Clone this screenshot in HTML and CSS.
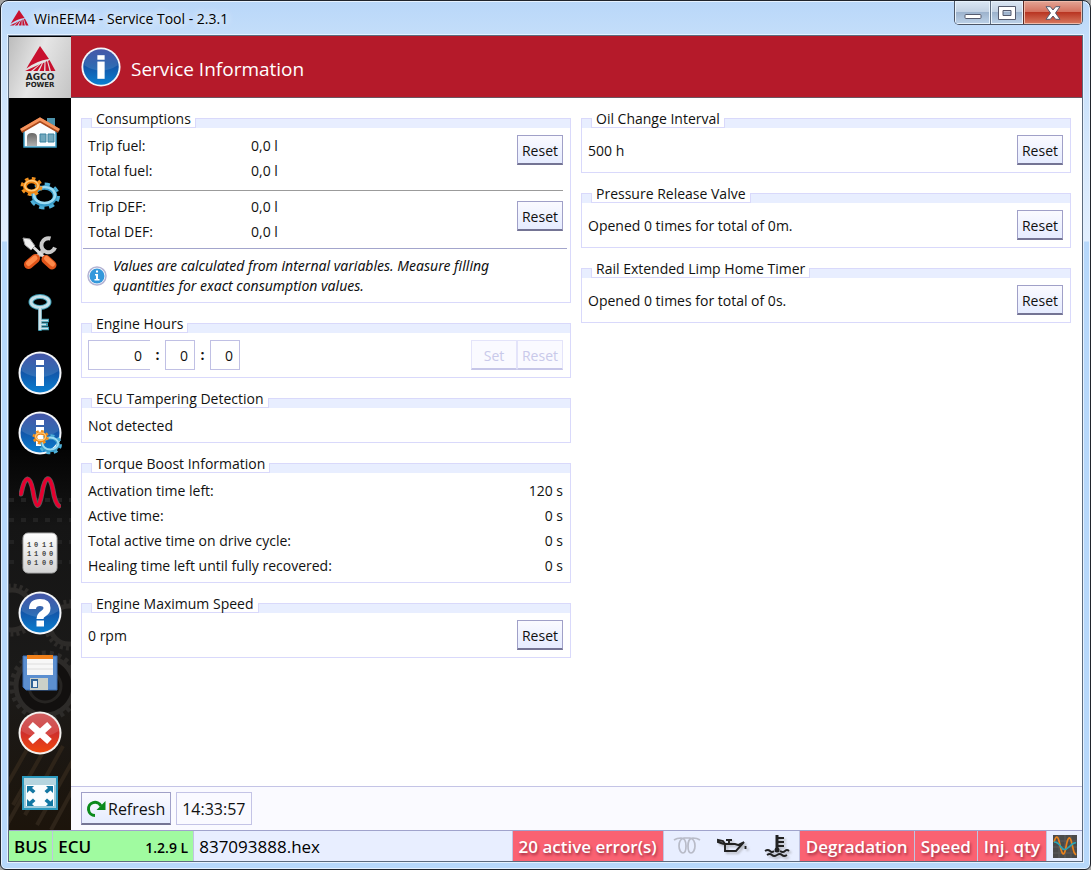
FILE: index.html
```html
<!DOCTYPE html>
<html lang="en">
<head>
<meta charset="utf-8">
<title>WinEEM4 - Service Tool - 2.3.1</title>
<link rel="stylesheet" href="styles.css">
</head>
<body>
<svg class="defs" aria-hidden="true">
  <defs>
    <linearGradient id="blue" x1="0" y1="0" x2="0" y2="1"><stop offset="0" stop-color="#2b3f9c"/><stop offset=".45" stop-color="#1453a6"/><stop offset="1" stop-color="#0a7fd0"/></linearGradient>
    <linearGradient id="red" x1="0" y1="0" x2="0" y2="1"><stop offset="0" stop-color="#c8474a"/><stop offset=".5" stop-color="#cf2e2b"/><stop offset="1" stop-color="#f0480e"/></linearGradient>
    <linearGradient id="pale" x1="0" y1="0" x2="0" y2="1"><stop offset="0" stop-color="#ffffff"/><stop offset="1" stop-color="#d4d4d4"/></linearGradient>
    <linearGradient id="door" x1="0" y1="0" x2="0" y2="1"><stop offset="0" stop-color="#666"/><stop offset="1" stop-color="#b0b0b0"/></linearGradient>
    <linearGradient id="dusk" x1="0" y1="0" x2="0" y2="1"><stop offset="0" stop-color="#040404"/><stop offset=".2" stop-color="#151515"/><stop offset=".6" stop-color="#1b1a19"/><stop offset="1" stop-color="#1c140b"/></linearGradient>
    <symbol id="agco" viewBox="0 0 32 26">
      <path d="M16 0L25 13Q12 15 2.500 22.500L5 18ZM25.500 14L31.500 25H27L24 15ZM23 15L25.500 25H21.500L21.500 16ZM20.500 16.500L20 25H15.500L19 17ZM18 17.300L13.500 25H9L16.500 18ZM15.500 18.300L7 25H1L14 19Z" fill="#c8102e"/>
    </symbol>
    <symbol id="info" viewBox="0 0 44 44">
      <circle cx="22" cy="22" r="21.500" fill="#f4f6fa"/><circle cx="22" cy="22" r="19.500" fill="url(#blue)"/>
      <path d="M3.500 20A18.500 18.500 0 0 1 40.500 20Q22 32 3.500 20Z" fill="#fff" opacity=".13"/>
      <rect x="18" y="9" width="8" height="5" fill="#fff"/><rect x="18" y="16" width="8" height="19" fill="#fff"/>
    </symbol>
    <symbol id="gears" viewBox="0 0 40 34">
      <g fill="none">
        <ellipse cx="24.500" cy="20" rx="13.500" ry="11.500" stroke="#4fb0d8" stroke-width="4" stroke-dasharray="5.200 4.600"/>
        <ellipse cx="24.500" cy="20" rx="10.500" ry="8.500" stroke="#3a9dca" stroke-width="4.500"/>
        <ellipse cx="24.500" cy="19" rx="10.500" ry="8" stroke="#9cdcf3" stroke-width="2.500"/>
        <ellipse cx="11.500" cy="10.500" rx="9.200" ry="7.800" stroke="#f2921f" stroke-width="3.500" stroke-dasharray="3.500 3.200"/>
        <ellipse cx="11.500" cy="10.500" rx="6.500" ry="5.200" stroke="#ee8412" stroke-width="4"/>
        <ellipse cx="11.500" cy="9.700" rx="6.700" ry="5" stroke="#ffca78" stroke-width="1.700"/>
      </g>
    </symbol>
  </defs>
</svg>
<div class="window">
  <header class="titlebar">
    <svg class="app-icon" aria-hidden="true"><use href="#agco"/></svg>
    <span class="app-title">WinEEM4 - Service Tool - 2.3.1</span>
    <div class="window-buttons">
      <button class="win-btn" aria-label="Minimize"><svg width="18" height="14" viewBox="0 0 18 14"><rect x="1" y="8.500" width="16" height="4" rx="1" fill="#fff" stroke="#555b6e"/></svg></button>
      <button class="win-btn win-max" aria-label="Maximize"><svg width="18" height="14" viewBox="0 0 18 14"><path d="M.5.5h17v13H.5zM5 4.500v5h8v-5z" fill="#fff" fill-rule="evenodd" stroke="#555b6e"/></svg></button>
      <button class="win-btn win-close" aria-label="Close"><svg width="16" height="14" viewBox="0 0 16 14"><path d="M1 .7h4.300L8 4 10.700.7H15L10.500 7 15 13.300h-4.300L8 10l-2.700 3.300H1L5.500 7z" fill="#fff" stroke="#555b6e"/></svg></button>
    </div>
  </header>

  <div class="client">
    <div class="logo">
      <svg width="62" height="60" viewBox="0 0 62 60" role="img" aria-label="AGCO Power">
        <use href="#agco" x="15" y="9" width="32" height="26"/>
        <text x="31" y="43" class="logo-name">AGCO</text>
        <text x="31" y="50" class="logo-sub">POWER</text>
      </svg>
    </div>
    <div class="page-head">
      <svg class="head-icon" aria-hidden="true"><use href="#info"/></svg>
      <h1>Service Information</h1>
    </div>

    <nav class="sidebar" aria-label="Main">
      <svg class="texture" viewBox="0 0 62 380" preserveAspectRatio="xMidYMax slice" aria-hidden="true">
        <rect width="62" height="380" fill="url(#dusk)"/>
        <g fill="none" stroke="#2d2b29" stroke-width="5">
          <path d="M0 50h62M0 70h62M0 92h62M0 112h62" stroke="#222" stroke-width="4" stroke-dasharray="5 7"/>
          <circle cx="3" cy="160" r="20"/><circle cx="3" cy="160" r="24" stroke-dasharray="3 3"/>
          <circle cx="60" cy="175" r="19"/><circle cx="60" cy="175" r="23" stroke-dasharray="3 3"/>
          <circle cx="36" cy="236" r="29" fill="#12100f"/><circle cx="36" cy="236" r="33" stroke-dasharray="4 4"/>
          <circle cx="36" cy="236" r="16" stroke="#262422" stroke-width="3"/>
          <path d="M-5 340L28 282M4 355L42 288M16 365L54 296M28 375L64 310M42 380L70 328M-5 380L14 346" stroke="#2e2419" stroke-width="4"/>
        </g>
      </svg>
      <button aria-label="Home"><svg width="40" height="34" viewBox="0 0 40 34">
        <path d="M27 2h8v12h-8z" fill="#4d93ac"/><path d="M4 14L20 5l16 9v17H4z" fill="#fbfdff" stroke="#3b9ac4" stroke-width="1.500"/>
        <path d="M1 15L20 4l19 11" fill="none" stroke="#a9491c" stroke-width="4.500"/><path d="M1 14L20 3l19 11" fill="none" stroke="#f5935c" stroke-width="3"/>
        <path d="M7 30v-9q0-4 5-4t5 4v9z" fill="url(#door)"/><path d="M20 18h6v8h-6zM28 18h6v8h-6z" fill="#70a7bd" stroke="#3a829f"/></svg></button>
      <button aria-label="Settings"><svg width="40" height="34"><use href="#gears"/></svg></button>
      <button aria-label="Tools"><svg width="40" height="36" viewBox="0 0 40 36">
        <path d="M16 23L24 15" stroke="#c4c4c4" stroke-width="4.500"/>
        <path d="M30.500 3.500A7 7 0 1 0 35 12.500" fill="none" stroke="#c9c9c9" stroke-width="4"/>
        <path d="M15.500 23.500L8.500 29.500" stroke="#e0551a" stroke-width="9" stroke-linecap="round"/><path d="M15 23L8.500 28.500" stroke="#ff8a4a" stroke-width="5" stroke-linecap="round"/>
        <path d="M11 10L25 23" stroke="#dcdcdc" stroke-width="3"/><path d="M3 3l7 1 5 7-4 4-6-5z" fill="#efefef" stroke="#999"/>
        <path d="M26 24.500L32 30" stroke="#e0551a" stroke-width="9" stroke-linecap="round"/><path d="M26.500 23.500L32.500 29" stroke="#ff8a4a" stroke-width="5" stroke-linecap="round"/></svg></button>
      <button aria-label="Access key"><svg width="24" height="38" viewBox="0 0 24 38" fill="none">
        <ellipse cx="12" cy="8" rx="9" ry="5.500" stroke="#3e9eb5" stroke-width="5"/><ellipse cx="12" cy="8" rx="9" ry="5.500" stroke="#c5dfe8" stroke-width="3"/>
        <path d="M12 14v23M14 26.500h7M14 30.500h6M14 34.500h7" stroke="#3e9eb5" stroke-width="3.500"/><path d="M12 13v23" stroke="#cfe3ea" stroke-width="3"/><path d="M13 26.500h7M13 30.500h5M13 34.500h7" stroke="#cfe3ea" stroke-width="1.500"/></svg></button>
      <button aria-label="Service information"><svg width="44" height="44"><use href="#info"/></svg></button>
      <button aria-label="Information settings"><svg width="44" height="44" viewBox="0 0 44 44"><use href="#info" width="44" height="44"/><use href="#gears" x="14" y="18" width="30" height="26"/></svg></button>
      <button aria-label="Measurements"><svg width="42" height="34" viewBox="0 0 42 34" fill="none" stroke-linecap="round"><path d="M2 18C6-2 11-1 14 15C17 34 20 34 23 17C26-1 31-2 34 14Q36 27 40 30" stroke="#5a5a5a" stroke-width="5"/><path d="M2 18C6-2 11-1 14 15C17 34 20 34 23 17C26-1 31-2 34 14Q36 27 40 30" stroke="#e5002f" stroke-width="3.500"/></svg></button>
      <button aria-label="Binary data"><svg width="36" height="42" viewBox="0 0 36 42"><rect x="1" y="1" width="34" height="40" rx="5" fill="url(#pale)" stroke="#aaa"/>
        <g class="bits"><text x="5" y="15">1</text><text x="12" y="15">0</text><text x="20" y="15">1</text><text x="27" y="15">1</text><text x="5" y="24">1</text><text x="12" y="24">1</text><text x="20" y="24">0</text><text x="27" y="24">0</text><text x="5" y="33">0</text><text x="12" y="33">1</text><text x="20" y="33">0</text><text x="27" y="33">0</text></g></svg></button>
      <button aria-label="Help"><svg width="44" height="44" viewBox="0 0 44 44"><circle cx="22" cy="22" r="21.500" fill="#f4f6fa"/><circle cx="22" cy="22" r="19.500" fill="url(#blue)"/><path d="M3.500 20A18.500 18.500 0 0 1 40.500 20Q22 32 3.500 20Z" fill="#fff" opacity=".13"/>
        <path d="M14.500 18q0-6.500 7.500-6.500 7 0 7 5.500 0 3.500-3.500 5.500-3.500 2-3.500 5.500" fill="none" stroke="#fff" stroke-width="7"/><rect x="18.500" y="29.500" width="7.500" height="6" fill="#fff"/></svg></button>
      <button aria-label="Save"><svg width="36" height="36" viewBox="0 0 36 36"><path d="M1 1h34v34H4l-3-3z" fill="#5c8fd0" stroke="#3c6fb4"/><path d="M5 1h26v19H5z" fill="#f7f7f7"/><path d="M5 0h26v4H5z" fill="#f0801a"/><path d="M5 9h26M5 14h26" stroke="#ddd"/>
        <path d="M8 23h18v12H8z" fill="#ccd0c8"/><path d="M9 24h7v9H9z" fill="#2f6296"/><path d="M11 26h4v6h-4z" fill="#e8eef2"/></svg></button>
      <button aria-label="Disconnect"><svg width="44" height="44" viewBox="0 0 44 44"><circle cx="22" cy="22" r="21.500" fill="#f3f1ef"/><circle cx="22" cy="22" r="19.500" fill="url(#red)"/><path d="M3.500 20A18.500 18.500 0 0 1 40.500 20Q22 32 3.500 20Z" fill="#fff" opacity=".13"/><path d="M12.500 13.500l19 17M31.500 13.500l-19 17" stroke="#fff" stroke-width="7"/></svg></button>
      <button aria-label="Full screen"><svg width="36" height="34" viewBox="0 0 36 34"><rect x="1" y="1" width="34" height="32" fill="#fafdfe" stroke="#2b98bd" stroke-width="2"/><path d="M2 2h32v7H2z" fill="#b6d5df"/><path d="M3 9v23M33 9v23M2 31h32" stroke="#9ccbdb" stroke-width="2"/>
        <path d="M5 10h7l-2 2 3.500 3-2.500 2.500-3.500-3L5 17zM31 10h-7l2 2-3.500 3 2.500 2.500 3.500-3L31 17zM5 30h7l-2-2 3.500-3-2.500-2.500-3.500 3L5 23zM31 30h-7l2-2-3.500-3 2.500-2.500 3.500 3L31 23z" fill="#1277a2"/></svg></button>
    </nav>

    <main class="content">
      <div class="column">
        <section class="panel">
          <div class="panel-head"><h2>Consumptions</h2></div>
          <div class="panel-body">
            <div class="group">
              <dl class="readings"><dt>Trip fuel:</dt><dd>0,0 l</dd><dt>Total fuel:</dt><dd>0,0 l</dd></dl>
              <button class="btn">Reset</button>
            </div>
            <div class="group group-def">
              <dl class="readings"><dt>Trip DEF:</dt><dd>0,0 l</dd><dt>Total DEF:</dt><dd>0,0 l</dd></dl>
              <button class="btn">Reset</button>
            </div>
          </div>
          <div class="note">
            <svg width="20" height="20" viewBox="0 0 20 20" aria-hidden="true"><circle cx="10" cy="10" r="9" fill="#fff" stroke="#b4b4d4" stroke-width="1.500"/><circle cx="10" cy="10" r="7.500" fill="#3498db"/><path d="M9 4.500h2v2H9zM8 8h3v5h1.500v1.500H7.500V13H9V9.500H8z" fill="#fff"/></svg>
            <p>Values are calculated from internal variables. Measure filling quantities for exact consumption values.</p>
          </div>
        </section>
        <section class="panel">
          <div class="panel-head"><h2>Engine Hours</h2></div>
          <div class="panel-body action-row">
            <div class="time-entry">
              <input class="hours" aria-label="Hours" value="0"><span>:</span><input aria-label="Minutes" value="0"><span>:</span><input aria-label="Seconds" value="0">
            </div>
            <div class="btn-pair"><button class="btn" disabled>Set</button><button class="btn" disabled>Reset</button></div>
          </div>
        </section>
        <section class="panel">
          <div class="panel-head"><h2>ECU Tampering Detection</h2></div>
          <div class="panel-body"><p>Not detected</p></div>
        </section>
        <section class="panel">
          <div class="panel-head"><h2>Torque Boost Information</h2></div>
          <div class="panel-body">
            <dl class="readings timers"><dt>Activation time left:</dt><dd>120 s</dd><dt>Active time:</dt><dd>0 s</dd><dt>Total active time on drive cycle:</dt><dd>0 s</dd><dt>Healing time left until fully recovered:</dt><dd>0 s</dd></dl>
          </div>
        </section>
        <section class="panel">
          <div class="panel-head"><h2>Engine Maximum Speed</h2></div>
          <div class="panel-body action-row"><p>0 rpm</p><button class="btn">Reset</button></div>
        </section>
      </div>
      <div class="column">
        <section class="panel">
          <div class="panel-head"><h2>Oil Change Interval</h2></div>
          <div class="panel-body action-row"><p>500 h</p><button class="btn">Reset</button></div>
        </section>
        <section class="panel">
          <div class="panel-head"><h2>Pressure Release Valve</h2></div>
          <div class="panel-body action-row"><p>Opened 0 times for total of 0m.</p><button class="btn">Reset</button></div>
        </section>
        <section class="panel">
          <div class="panel-head"><h2>Rail Extended Limp Home Timer</h2></div>
          <div class="panel-body action-row"><p>Opened 0 times for total of 0s.</p><button class="btn">Reset</button></div>
        </section>
      </div>
    </main>

    <div class="toolbar">
      <button class="btn refresh"><svg width="20" height="20" viewBox="0 0 20 20" aria-hidden="true"><path d="M9 16.500A6.600 6.600 0 1 1 15 7" fill="none" stroke="#0b8a1c" stroke-width="3"/><path d="M19.500 2v9h-9z" fill="#0b8a1c"/></svg>Refresh</button>
      <time class="clock">14:33:57</time>
    </div>

    <footer class="statusbar">
      <div class="cell ok">BUS</div>
      <div class="cell ok ecu"><span>ECU</span><small>1.2.9 L</small></div>
      <div class="cell file">837093888.hex</div>
      <div class="cell alert">20 active error(s)</div>
      <div class="lamps">
        <svg width="28" height="20" viewBox="0 0 28 20" fill="none" stroke="#b8bbc8" stroke-width="1.700" role="img" aria-label="Preheat"><path d="M1 4Q4 2 8 2c4 0 5 4 5 8s-1 7-3 7-4-3-4-7 1-7 5-8h6c4 1 5 4 5 8s-2 7-4 7-3-3-3-7 1-8 5-8q4 0 7 2"/></svg>
        <svg width="30" height="16" viewBox="0 0 30 16" fill="none" stroke="#222" stroke-width="1.900" role="img" aria-label="Oil pressure"><path d="M7 6L1 4V2l5 1 2 3h10l3 1 6-3-8 9H8V6M9 2h6M12 2v4"/><path d="M28.500 8v3"/></svg>
        <svg width="26" height="24" viewBox="0 0 26 24" fill="none" stroke="#222" stroke-width="1.800" role="img" aria-label="Coolant temperature"><path d="M13 1v15" stroke-width="3"/><path d="M14 4h6M14 8h6M14 12h6M1 17q3-2 5 0t4 0M16 17q3 2 5 0t4 0M3 21q3-2 5 0t5 0 5 0 5 0"/><circle cx="13" cy="16" r="2.500" fill="#222" stroke="none"/></svg>
      </div>
      <div class="cell alert">Degradation</div>
      <div class="cell alert">Speed</div>
      <div class="cell alert">Inj. qty</div>
      <button class="scope" aria-label="Signals"><svg width="24" height="23" viewBox="0 0 24 23" fill="none" stroke-width="1.700"><rect width="24" height="23" fill="#4a4a4a"/><path d="M0 6h24M0 12h24M0 18h24M6 0v23M12 0v23M18 0v23" stroke="#5c5c5c" stroke-width="1"/><path d="M1 7c2-7 4-7 6 3s4 13 6 2 4-12 6-3 2 9 4 11" stroke="#e8811c"/><path d="M1 7q4 0 7 5t8 0 7-4" stroke="#2ba5b5"/></svg></button>
    </footer>
  </div>
</div>
</body>
</html>
```
FILE: styles.css
```css
* { box-sizing: border-box; }
body { margin: 0; background: #a4a4a4; font: 14px/20px "Open Sans", "Noto Sans", sans-serif; color: #111; }
h1, h2, p, dl, dd { margin: 0; font-weight: 400; }
button, input { font: inherit; color: inherit; margin: 0; }
svg { display: block; flex: none; }
.defs { position: absolute; width: 0; height: 0; }

.window {
  min-height: 100vh; display: flex; flex-direction: column; padding: 0 7px 7px;
  border: 1px solid #20242c; border-radius: 8px 8px 6px 6px;
  box-shadow: inset 0 0 0 1px #e6f2ff;
  background: linear-gradient(#b9d7f9 0, #c4defa 36px, #e2effe 240px, #b7d8fb 241px);
}
.titlebar { height: 34px; display: flex; align-items: flex-start; padding-left: 1px; }
.app-icon { width: 20px; height: 16px; margin: 9px 5px 0 0; }
.app-title { flex: 1; line-height: 35px; color: #000; text-shadow: 0 0 8px #fff, 0 0 10px #fff; }
.window-buttons { display: flex; border: 1px solid #4c5565; border-top: 0; border-radius: 0 0 5px 5px; overflow: hidden; }
.win-btn { width: 35px; height: 23px; padding: 0; border: 0; display: grid; place-items: center; background: linear-gradient(#dbe7f4 0, #c1d0e2 48%, #9db3cd 50%, #bdd2e8); box-shadow: inset 0 0 0 1px #e8f2fb; }
.win-max { width: 33px; border-left: 1px solid #5d6c80; }
.win-close { width: 59px; border-left: 1px solid #5d2a25; background: linear-gradient(#e3a596 0, #d4705d 48%, #b93623 50%, #d8795f); box-shadow: inset 0 0 0 1px #efb9a8; }

.client {
  flex: 1; display: grid; grid-template: 62px 1fr 44px 31px / 62px 1fr;
  border: 1px solid #5c6b7e; background: #fff; box-shadow: 0 0 0 1px #e4f1ff;
}
.logo { background: linear-gradient(110deg, #bcbcbc, #e6e6e6 45%, #c4c4c4); border-top: 1px solid #000; }
.logo-name, .logo-sub { font: 700 9px "DejaVu Sans", sans-serif; text-anchor: middle; fill: #222; }
.logo-sub { font-size: 7px; }
.page-head { background: #b51a2a; border-bottom: 1px solid #6b5560; display: flex; align-items: center; gap: 10px; padding-left: 10px; color: #fff; }
.head-icon { width: 40px; height: 40px; }
.page-head h1 { font-size: 19px; line-height: 28px; padding-top: 4px; }

.sidebar { grid-row: 2 / 4; position: relative; background: #000; padding-top: 5px; }
.sidebar button { position: relative; width: 100%; height: 60px; padding: 0; border: 0; background: none; display: grid; place-items: center; }
.texture { position: absolute; left: 0; bottom: 0; width: 100%; height: 380px; }
.bits { font: 700 7px "Liberation Mono", monospace; fill: #444; }

.content { display: grid; grid-template-columns: 1fr 1fr; gap: 10px; padding: 20px 11px 20px 10px; align-items: start; }
.column { display: grid; gap: 20px; }
.panel { border: 1px solid #d9d9fb; }
.panel-head { height: 9px; background: #e8eeff; display: flex; align-items: flex-end; padding-left: 9px; }
.panel-head h2 {
  --edge: linear-gradient(#d9d9fb, #d9d9fb);
  font-size: 14px; line-height: 17px; padding: 0 5px 1px;
  background: var(--edge) left bottom / 1px 10px no-repeat, var(--edge) right bottom / 1px 10px no-repeat, var(--edge) bottom / 100% 1px no-repeat, #fff;
}
.panel-body { padding: 5px 7px 4px 6px; line-height: 25px; }
.action-row { display: flex; align-items: center; justify-content: space-between; padding-top: 7px; padding-bottom: 7px; line-height: 20px; }
.action-row p { padding-top: 2px; }
.group { display: flex; align-items: flex-start; justify-content: space-between; padding-bottom: 7px; }
.group .btn { margin-top: 2px; }
.group-def { border-top: 1px solid #9b9b9b; padding: 3px 0 0; }
.group-def .btn { margin-top: 7px; }
.readings { display: grid; grid-template-columns: 163px auto; }
.timers { grid-template-columns: 1fr auto; flex: 1; }
.timers dd { text-align: right; }
.note { margin: 0 3px 0 1px; border-top: 1px solid #a3a5cc; padding: 7px 50px 6px 4px; display: flex; align-items: center; gap: 6px; font-family: "Noto Sans", sans-serif; font-style: italic; }

.btn { min-width: 46px; height: 30px; padding: 2px 4px 0; border: 1px solid #a0a0c8; border-bottom: 2px solid #747494; background: linear-gradient(#fafaff, #e6ecff); }
.btn:disabled { color: #c9c9ea; border-color: #e4e4fa; border-bottom-color: #c6c6e8; background: #fafaff; }
.btn-pair { display: flex; }
.time-entry { display: flex; align-items: center; }
.time-entry span { width: 15px; text-align: center; font-weight: 700; }
.time-entry input { width: 30px; height: 30px; padding: 0 6px 0 0; text-align: right; border: 1px solid #c0c0e4; background: #fff; border-radius: 0; }
.time-entry .hours { width: 62px; border-right: 0; padding-right: 8px; }

.toolbar { border-top: 1px solid #c4c4e6; background: #fafaff; display: flex; align-items: center; gap: 5px; padding-left: 10px; font-size: 16px; }
.refresh { height: 33px; display: flex; align-items: center; gap: 2px; padding: 2px 5px 0 4px; }
.clock { height: 33px; line-height: 33px; padding: 0 5px; border: 1px solid #c4c4e6; }

.statusbar { grid-column: 1 / 3; border-top: 1px solid #a0a3cc; background: #e8eeff; display: flex; font-size: 17px; line-height: 31px; color: #000; }
.cell { padding: 0 5px; border-right: 1px solid #c0c4e0; white-space: nowrap; }
.ok { background: #a0fba0; font-weight: 600; }
.ecu { width: 141px; display: flex; justify-content: space-between; }
.ecu small { font-size: 14px; line-height: 34px; }
.file { flex: 1; }
.alert { background: #fa6272; color: #fff; font-weight: 600; padding: 0 6px; text-shadow: 1px 2px 3px #9c2c40; }
.lamps { width: 136px; display: flex; align-items: center; justify-content: space-between; padding: 0 9px; border-right: 1px solid #c0c4e0; }
.lamps svg + svg { filter: drop-shadow(2px 2px 1px #8888); }
.scope { width: 35px; border: 0; padding: 0; background: none; display: grid; place-items: center; }
```
